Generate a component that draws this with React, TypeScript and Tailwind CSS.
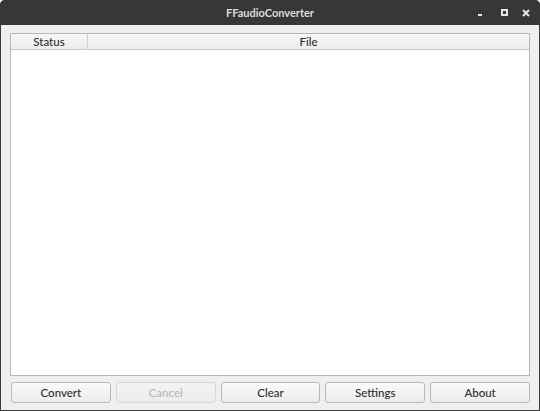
import React from "react";

const buttons = [
  { label: "Convert", disabled: false },
  { label: "Cancel", disabled: true },
  { label: "Clear", disabled: false },
  { label: "Settings", disabled: false },
  { label: "About", disabled: false },
];

export default function App() {
  return (
    <div
      className="w-[540px] h-[411px] bg-[#3c3c3c] flex flex-col overflow-hidden rounded-t-[5px]"
      style={{ fontFamily: 'Lato, "Noto Sans", sans-serif' }}
    >
      {/* title bar */}
      <div className="h-[25px] shrink-0 bg-[#373737] flex items-center relative">
        <div className="flex-1 text-center text-[11px] font-bold text-[#dfdbd2] pt-px">
          FFaudioConverter
        </div>
        <div className="absolute right-0 top-0 h-full flex items-center">
          <div className="w-[24px] flex justify-center pt-[4px]">
            <div className="w-[4px] h-[2px] bg-[#e6e6e6]" />
          </div>
          <div className="w-[24px] flex justify-center">
            <div className="w-[7px] h-[7px] border-[2px] border-[#e6e6e6] flex items-center justify-center">
              <div className="w-px h-px bg-[#373737]" />
            </div>
          </div>
          <div className="w-[24px] flex justify-center pr-[4px]">
            <svg width="8" height="8" viewBox="0 0 8 8">
              <path d="M1 1 L7 7 M7 1 L1 7" stroke="#e6e6e6" strokeWidth="2" />
            </svg>
          </div>
        </div>
      </div>

      {/* body */}
      <div className="flex-1 mx-px mb-px bg-[#efefef] flex flex-col px-[9px] pt-[8px] pb-[7px]">
        <div className="flex-1 bg-white border border-[#b8b8b8] flex flex-col">
          <div className="h-[16px] flex text-[11.5px] font-medium text-[#2e2e2e] bg-gradient-to-b from-[#f7f7f7] to-[#ececec] border-b border-[#c9c9c9]">
            <div className="w-[77px] border-r border-[#d2d2d2] flex items-center justify-center leading-none">
              Status
            </div>
            <div className="flex-1 flex items-center justify-center leading-none">File</div>
          </div>
          <div className="flex-1" />
        </div>
        <div className="flex gap-[5px] mt-[6px] pl-px">
          {buttons.map((b) => (
            <button
              key={b.label}
              disabled={b.disabled}
              className={`w-[100px] h-[21px] rounded-[3px] border text-[11.5px] font-medium leading-none bg-gradient-to-b ${
                b.disabled
                  ? "border-[#d6d6d6] from-[#f3f3f3] to-[#ececec] text-[#b8b8b8]"
                  : "border-[#b9b9b9] from-[#fafafa] to-[#ececec] text-[#2e2e2e]"
              }`}
            >
              {b.label}
            </button>
          ))}
        </div>
      </div>
    </div>
  );
}
